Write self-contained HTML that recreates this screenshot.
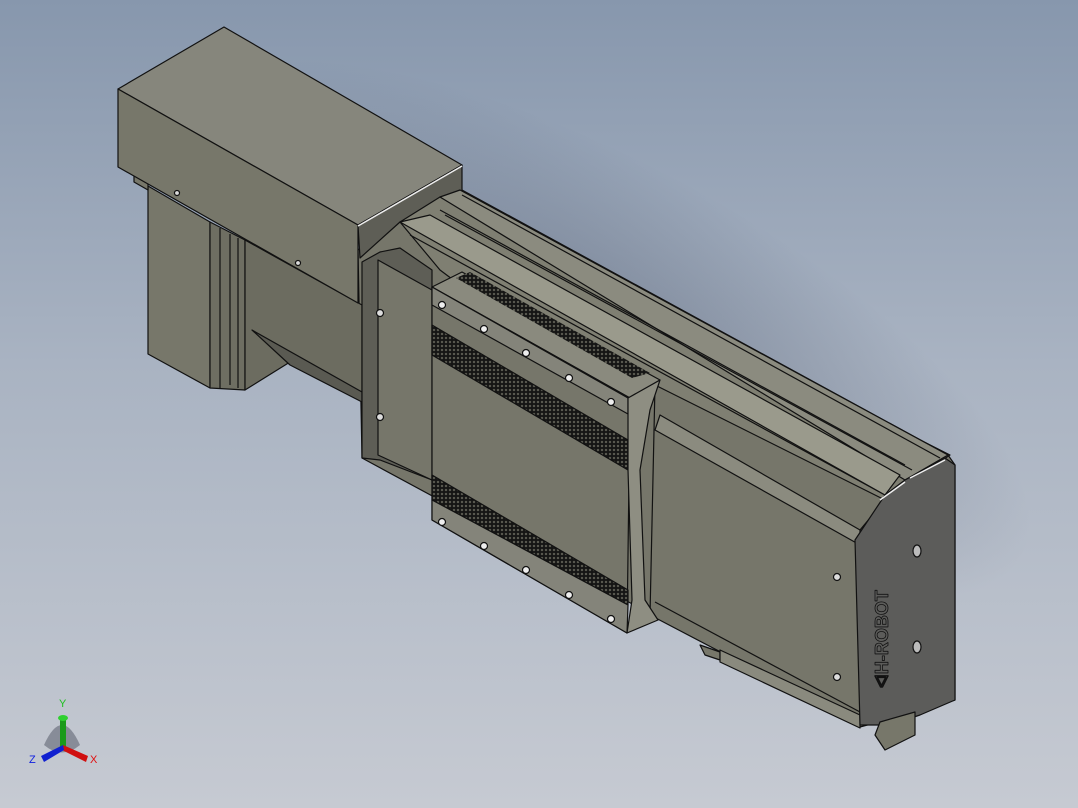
<!DOCTYPE html>
<html><head><style>
html,body{margin:0;padding:0;width:1078px;height:808px;overflow:hidden}
body{background:linear-gradient(180deg,#8797ad 0%,#a9b3c2 45%,#c6cad2 100%)}
svg{position:absolute;left:0;top:0}
</style></head><body>
<svg width="1078" height="808" viewBox="0 0 1078 808" stroke="#111" stroke-width="1.2" stroke-linejoin="round">
<defs>
<pattern id="kn" width="4" height="4" patternUnits="userSpaceOnUse"><rect width="4" height="4" fill="#2a2a26"/><circle cx="2" cy="2" r="0.9" fill="#77776a" stroke="none"/></pattern>
<radialGradient id="sh" cx="0.5" cy="0.5" r="0.5"><stop offset="0" stop-color="#4a556a" stop-opacity="0.45"/><stop offset="1" stop-color="#4a556a" stop-opacity="0"/></radialGradient>
</defs>
<ellipse cx="600" cy="330" rx="480" ry="170" transform="rotate(28 600 330)" fill="url(#sh)" stroke="none"/>
<!-- rail base silhouette -->
<polygon points="358,250 400,218 440,195 462,190 948,455 955,465 955,700 915,712 860,727 362,458" fill="#76766a"/>
<!-- motor -->
<polygon points="148,186 210,222 210,388 148,354" fill="#77776a"/>
<polygon points="210,222 245,240 245,390 210,388" fill="#6e6e62"/>
<line x1="220" y1="228" x2="220" y2="388"/><line x1="230" y1="234" x2="230" y2="385"/><line x1="238" y1="238" x2="238" y2="388"/>
<polygon points="245,240 362,305 362,400 290,362 245,390" fill="#6c6c60"/>
<polygon points="252,330 362,392 362,402 290,365" fill="#5a5a52"/>
<polygon points="134,175 148,183 148,190 134,182" fill="#77776a"/>
<!-- box -->
<polygon points="118,89 224,27 462,165 358,225" fill="#86867c"/>
<polygon points="118,89 358,225 358,303 118,167" fill="#77776a"/>
<polygon points="358,225 462,165 462,192 400,222 360,258" fill="#5e5e56"/>
<line x1="358" y1="226" x2="462" y2="166" stroke="#eee" stroke-width="1.5"/>
<circle cx="177" cy="193" r="2.5" fill="#ddd"/><circle cx="298" cy="263" r="2.5" fill="#ddd"/>
<!-- rail top -->
<polygon points="400,222 440,197 950,455 905,485 880,500 720,420 460,285 440,270" fill="#7f7f72"/>
<polygon points="440,197 460,190 948,455 905,480" fill="#8b8b7f"/>
<line x1="462" y1="195" x2="940" y2="458"/><line x1="445" y1="215" x2="912" y2="470"/>
<line x1="410" y1="235" x2="885" y2="495"/><line x1="440" y1="210" x2="905" y2="465"/>
<polygon points="400,222 430,215 900,475 885,495" fill="#9a9a8c"/>
<!-- rail front face -->
<polygon points="655,385 885,500 860,530 860,725 650,615" fill="#76766a"/>
<polygon points="660,415 860,530 860,545 655,430" fill="#8b8b7f"/>
<line x1="655" y1="602" x2="860" y2="712"/>
<polygon points="700,645 720,652 720,660 705,655" fill="#77776a"/>
<polygon points="720,650 860,715 860,728 720,662" fill="#8a8a7e"/>
<circle cx="837" cy="577" r="3.5" fill="#ddd"/><circle cx="837" cy="677" r="3.5" fill="#ddd"/>
<!-- end plate left -->
<polygon points="362,262 380,252 400,248 432,270 432,480 380,460 362,458" fill="#5e5e56"/>
<polygon points="378,260 432,290 432,480 378,455" fill="#76766a"/>
<circle cx="380" cy="313" r="3.5" fill="#ddd"/><circle cx="380" cy="417" r="3.5" fill="#ddd"/>
<!-- carriage -->
<polygon points="432,287 462,272 660,380 630,398" fill="#8a8a7e"/>
<polygon points="456,278 470,272 650,373 632,378" fill="url(#kn)" stroke="none"/>
<polygon points="432,287 630,398 627,633 432,520" fill="#76766a"/>
<polygon points="432,287 628,398 628,414 432,305" fill="#84847a"/>
<polygon points="432,325 628,440 628,470 432,355" fill="url(#kn)"/>
<polygon points="432,475 628,590 628,605 432,500" fill="url(#kn)"/>
<polygon points="432,500 628,605 627,633 432,520" fill="#84847a"/>
<polygon points="628,398 660,380 650,410 640,470 645,600 658,620 627,633 632,600 628,470" fill="#8e8e82"/>
<g fill="#eee"><circle cx="442" cy="305" r="3.5"/><circle cx="484" cy="329" r="3.5"/><circle cx="526" cy="353" r="3.5"/><circle cx="569" cy="378" r="3.5"/><circle cx="611" cy="402" r="3.5"/>
<circle cx="442" cy="522" r="3.5"/><circle cx="484" cy="546" r="3.5"/><circle cx="526" cy="570" r="3.5"/><circle cx="569" cy="595" r="3.5"/><circle cx="611" cy="619" r="3.5"/></g>
<!-- end cap -->
<polygon points="855,540 885,495 905,480 945,458 955,465 955,700 920,715 905,720 885,725 860,725" fill="#5c5c5a"/>
<line x1="880" y1="500" x2="905" y2="482" stroke="#eee" stroke-width="1.5"/><line x1="910" y1="478" x2="945" y2="460" stroke="#eee" stroke-width="1.5"/>
<polygon points="875,735 880,722 915,712 915,735 885,750" fill="#77776a"/>
<ellipse cx="917" cy="551" rx="4" ry="6" fill="#bbb"/><ellipse cx="917" cy="647" rx="4" ry="6" fill="#bbb"/>
<text x="0" y="0" transform="translate(888,688) rotate(-90)" font-family="Liberation Sans, sans-serif" font-size="18" font-weight="bold" fill="none" stroke="#111" stroke-width="0.8">ᐊH-ROBOT</text>
<!-- triad -->
<g stroke="none">
<path d="M44,745 Q62,705 80,745 Q62,760 44,745Z" fill="#6e7480" opacity="0.7"/>
<rect x="60" y="718" width="6" height="30" fill="#1a9a1a"/><ellipse cx="63" cy="718" rx="5" ry="3" fill="#2fd02f"/>
<polygon points="63,745 88,756 86,762 62,750" fill="#d01010"/>
<polygon points="63,745 41,756 44,762 64,750" fill="#1020d0"/>
</g>
<text x="59" y="707" font-family="Liberation Sans, sans-serif" font-size="11" fill="#20c020" stroke="none">Y</text>
<text x="90" y="763" font-family="Liberation Sans, sans-serif" font-size="11" fill="#e01010" stroke="none">X</text>
<text x="29" y="763" font-family="Liberation Sans, sans-serif" font-size="11" fill="#1020e0" stroke="none">Z</text>
</svg>
</body></html>
